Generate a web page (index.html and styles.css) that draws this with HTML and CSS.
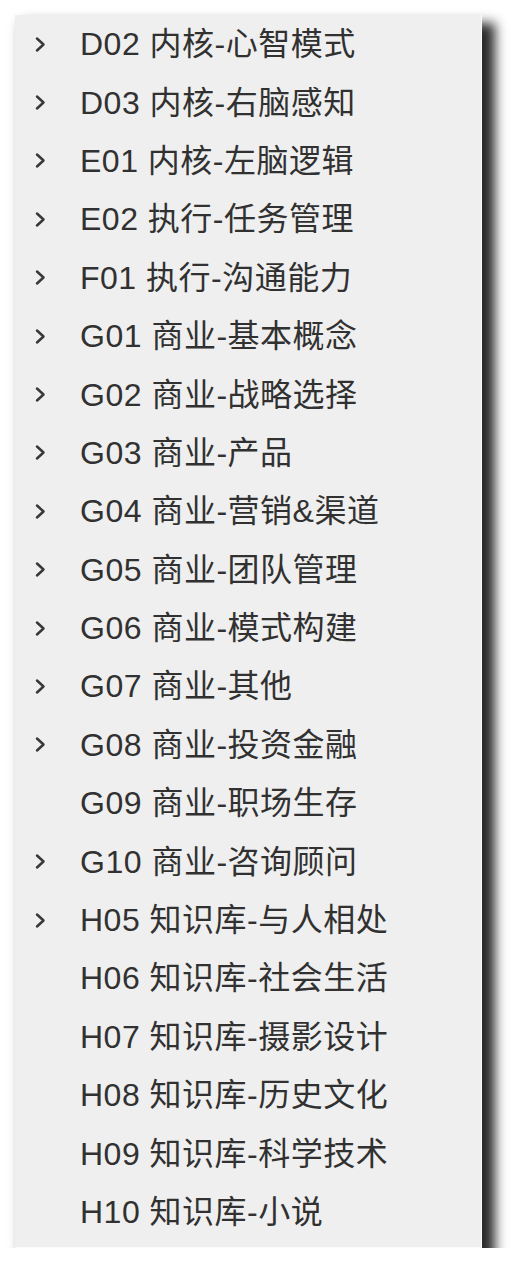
FILE: index.html
```html
<!DOCTYPE html>
<html lang="zh">
<head>
<meta charset="utf-8">
<link rel="stylesheet" href="styles.css">
</head>
<body>
<div class="panel">
  <ul class="list">
    <li class="row"><span class="chev"><svg viewBox="0 0 12 17" width="12" height="17"><path d="M3 2.5 L9.5 8.5 L3 14.5" /></svg></span><span class="label">D02 内核-心智模式</span></li>
    <li class="row"><span class="chev"><svg viewBox="0 0 12 17" width="12" height="17"><path d="M3 2.5 L9.5 8.5 L3 14.5" /></svg></span><span class="label">D03 内核-右脑感知</span></li>
    <li class="row"><span class="chev"><svg viewBox="0 0 12 17" width="12" height="17"><path d="M3 2.5 L9.5 8.5 L3 14.5" /></svg></span><span class="label">E01 内核-左脑逻辑</span></li>
    <li class="row"><span class="chev"><svg viewBox="0 0 12 17" width="12" height="17"><path d="M3 2.5 L9.5 8.5 L3 14.5" /></svg></span><span class="label">E02 执行-任务管理</span></li>
    <li class="row"><span class="chev"><svg viewBox="0 0 12 17" width="12" height="17"><path d="M3 2.5 L9.5 8.5 L3 14.5" /></svg></span><span class="label">F01 执行-沟通能力</span></li>
    <li class="row"><span class="chev"><svg viewBox="0 0 12 17" width="12" height="17"><path d="M3 2.5 L9.5 8.5 L3 14.5" /></svg></span><span class="label">G01 商业-基本概念</span></li>
    <li class="row"><span class="chev"><svg viewBox="0 0 12 17" width="12" height="17"><path d="M3 2.5 L9.5 8.5 L3 14.5" /></svg></span><span class="label">G02 商业-战略选择</span></li>
    <li class="row"><span class="chev"><svg viewBox="0 0 12 17" width="12" height="17"><path d="M3 2.5 L9.5 8.5 L3 14.5" /></svg></span><span class="label">G03 商业-产品</span></li>
    <li class="row"><span class="chev"><svg viewBox="0 0 12 17" width="12" height="17"><path d="M3 2.5 L9.5 8.5 L3 14.5" /></svg></span><span class="label">G04 商业-营销&amp;渠道</span></li>
    <li class="row"><span class="chev"><svg viewBox="0 0 12 17" width="12" height="17"><path d="M3 2.5 L9.5 8.5 L3 14.5" /></svg></span><span class="label">G05 商业-团队管理</span></li>
    <li class="row"><span class="chev"><svg viewBox="0 0 12 17" width="12" height="17"><path d="M3 2.5 L9.5 8.5 L3 14.5" /></svg></span><span class="label">G06 商业-模式构建</span></li>
    <li class="row"><span class="chev"><svg viewBox="0 0 12 17" width="12" height="17"><path d="M3 2.5 L9.5 8.5 L3 14.5" /></svg></span><span class="label">G07 商业-其他</span></li>
    <li class="row"><span class="chev"><svg viewBox="0 0 12 17" width="12" height="17"><path d="M3 2.5 L9.5 8.5 L3 14.5" /></svg></span><span class="label">G08 商业-投资金融</span></li>
    <li class="row"><span class="chev"></span><span class="label">G09 商业-职场生存</span></li>
    <li class="row"><span class="chev"><svg viewBox="0 0 12 17" width="12" height="17"><path d="M3 2.5 L9.5 8.5 L3 14.5" /></svg></span><span class="label">G10 商业-咨询顾问</span></li>
    <li class="row"><span class="chev"><svg viewBox="0 0 12 17" width="12" height="17"><path d="M3 2.5 L9.5 8.5 L3 14.5" /></svg></span><span class="label">H05 知识库-与人相处</span></li>
    <li class="row"><span class="chev"></span><span class="label">H06 知识库-社会生活</span></li>
    <li class="row"><span class="chev"></span><span class="label">H07 知识库-摄影设计</span></li>
    <li class="row"><span class="chev"></span><span class="label">H08 知识库-历史文化</span></li>
    <li class="row"><span class="chev"></span><span class="label">H09 知识库-科学技术</span></li>
    <li class="row"><span class="chev"></span><span class="label">H10 知识库-小说</span></li>
  </ul>
</div>
</body>
</html>
```

FILE: styles.css
```css
html, body {
  margin: 0;
  padding: 0;
  background: #ffffff;
}

body {
  padding: 15px 0 0 15px;
  font-family: "Liberation Sans", "Noto Sans CJK SC", sans-serif;
}

.panel {
  width: 467px;
  height: 1233px;
  box-sizing: border-box;
  background: #efefef;
  border-right: 1px solid #fbfbfb;
  border-bottom: 1px solid #fbfbfb;
  box-shadow: 10px 11px 11px 3px rgba(20, 20, 20, 0.9);
}

.list {
  list-style: none;
  margin: 0;
  padding: 0;
}

.row {
  height: 58.4px;
  display: flex;
  align-items: center;
  color: #313131;
}

.chev {
  width: 65px;
  padding-left: 19px;
  box-sizing: border-box;
  display: flex;
  align-items: center;
}

.chev svg {
  display: block;
  fill: none;
  stroke: #383838;
  stroke-width: 2.5;
  stroke-linecap: round;
  stroke-linejoin: round;
}

.label {
  font-size: 32px;
  line-height: 1;
  letter-spacing: 0.5px;
}
```
